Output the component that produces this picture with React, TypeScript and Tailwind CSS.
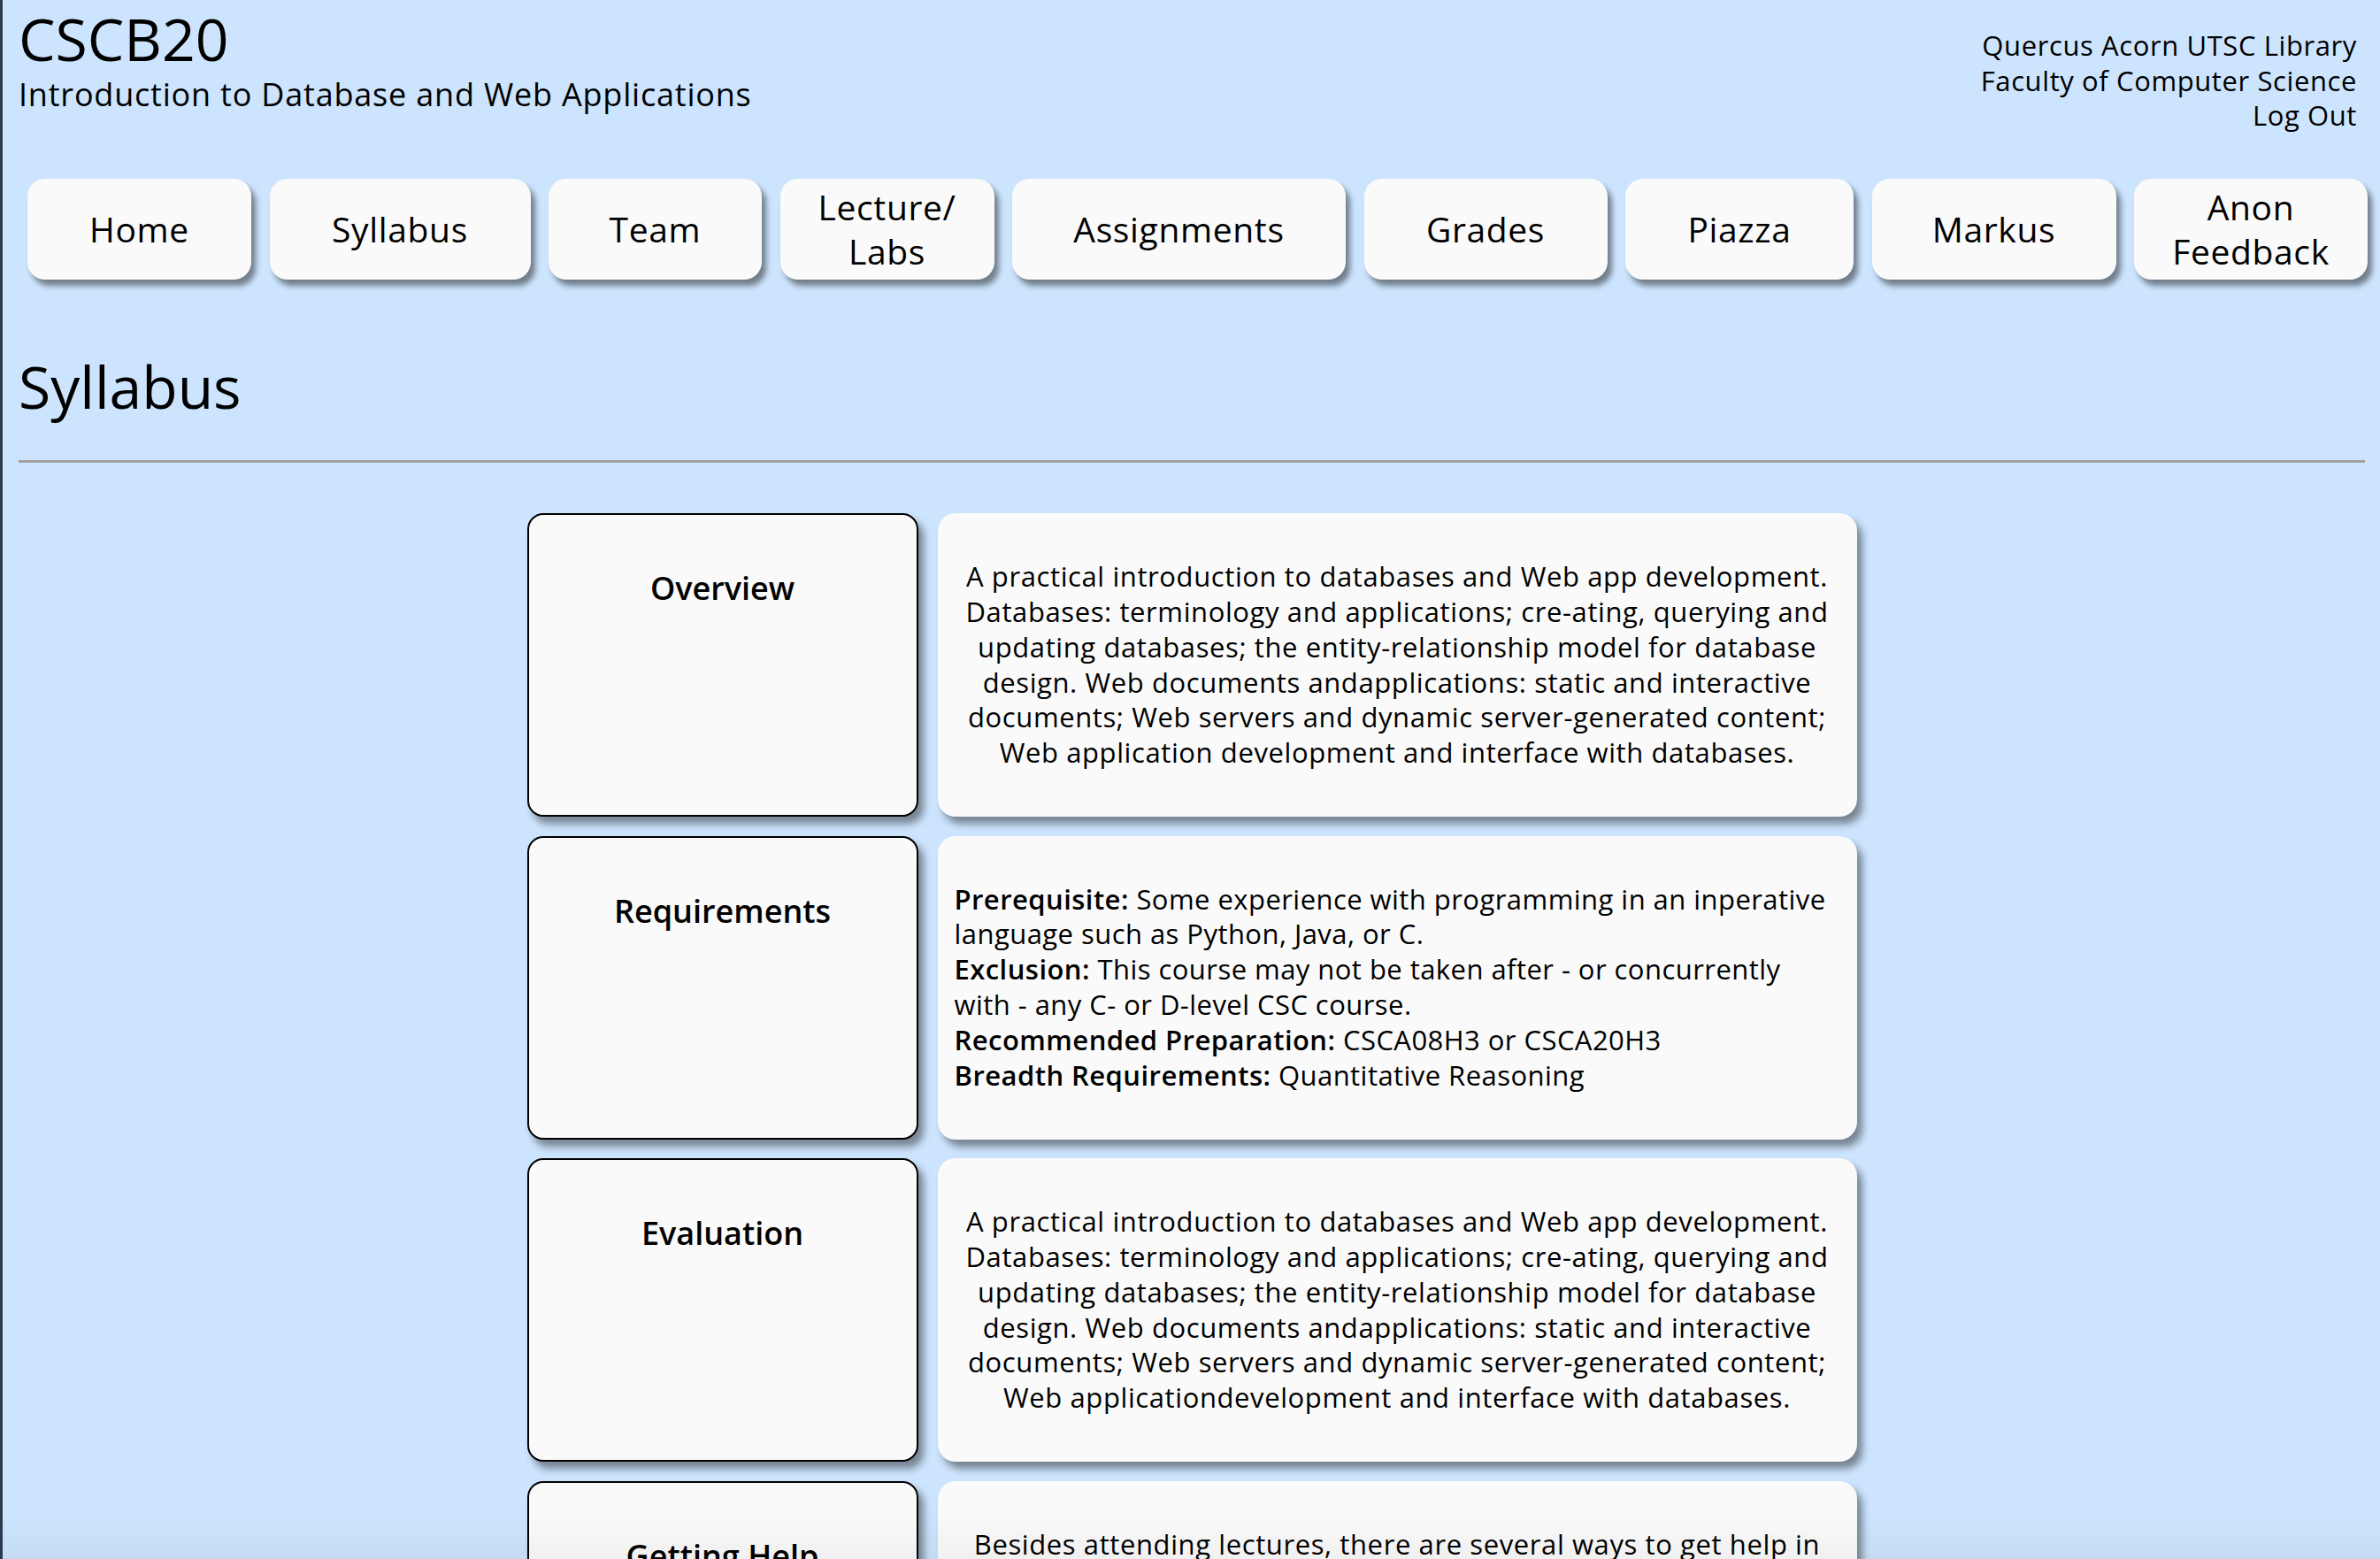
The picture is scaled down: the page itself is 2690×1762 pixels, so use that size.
import React from "react";

const nav: { label: React.ReactNode; w: string }[] = [
  { label: "Home", w: "w-[253px]" },
  { label: "Syllabus", w: "w-[295px]" },
  { label: "Team", w: "w-[241px]" },
  { label: <>Lecture/<br />Labs</>, w: "w-[242px]" },
  { label: "Assignments", w: "w-[377px]" },
  { label: "Grades", w: "w-[275px]" },
  { label: "Piazza", w: "w-[258px]" },
  { label: "Markus", w: "w-[276px]" },
  { label: <>Anon<br />Feedback</>, w: "w-[264px]" },
];

const overview = [
  "A practical introduction to databases and Web app development.",
  "Databases: terminology and applications; cre-ating, querying and",
  "updating databases; the entity-relationship model for database",
  "design. Web documents andapplications: static and interactive",
  "documents; Web servers and dynamic server-generated content;",
  "Web application development and interface with databases.",
];

const evaluation = [
  "A practical introduction to databases and Web app development.",
  "Databases: terminology and applications; cre-ating, querying and",
  "updating databases; the entity-relationship model for database",
  "design. Web documents andapplications: static and interactive",
  "documents; Web servers and dynamic server-generated content;",
  "Web applicationdevelopment and interface with databases.",
];

const help = [
  "Besides attending lectures, there are several ways to get help in",
  "this course: office hours with the instructor and the TAs, the",
  "Piazza discussion board, and the weekly tutorials. Please do not",
  "hesitate to ask questions early if you are having trouble with the",
  "course material, the assignments or anything else in the course;",
  "we are here to help you succeed in CSCB20.",
];

function Lines({ lines }: { lines: string[] }) {
  return (
    <p className="w-full text-center whitespace-nowrap">
      {lines.map((l, i) => (
        <React.Fragment key={i}>
          {l}
          {i < lines.length - 1 && <br />}
        </React.Fragment>
      ))}
    </p>
  );
}

function Row({ title, children }: { title: string; children: React.ReactNode }) {
  return (
    <>
      <div className="h-[343px] rounded-[18px] border-2 border-black bg-[#fafafa] pt-[58px] text-center text-[36px] font-semibold leading-[50px] shadow-[6px_8px_8px_rgba(0,0,0,0.42)]">
        {title}
      </div>
      <div className="flex h-[343px] items-center rounded-[20px] bg-[#fafafa] px-[19px] text-[31px] leading-[39.8px] tracking-[0.6px] shadow-[6px_8px_8px_rgba(0,0,0,0.42)]">
        {children}
      </div>
    </>
  );
}

export default function App() {
  return (
    <div
      className="relative h-[1762px] overflow-hidden border-l-[3px] border-[#2c3a4e] bg-[#cce4fd] pl-[18px] pr-[17px] text-black"
      style={{ fontFamily: '"Open Sans", "Noto Sans", sans-serif' }}
    >
      <header className="flex items-start justify-between">
        <div>
          <h1 className="mt-[3px] text-[66px] font-medium leading-[80px]">CSCB20</h1>
          <p className="mt-[6px] text-[36px] font-medium leading-none tracking-[0.8px]">
            Introduction to Database and Web Applications
          </p>
        </div>
        <div className="mt-[32px] mr-[9px] text-right text-[31px] leading-[39.5px] tracking-[0.6px]">
          <div>
            <a>Quercus</a> <a>Acorn</a> <a>UTSC Library</a>
          </div>
          <div>
            <a>Faculty of Computer Science</a>
          </div>
          <div>
            <a>Log Out</a>
          </div>
        </div>
      </header>

      <nav className="mt-[51.5px] flex gap-[20.5px] pl-[10px]">
        {nav.map((n, i) => (
          <div
            key={i}
            className={`${n.w} flex h-[114px] shrink-0 items-center justify-center rounded-[20px] bg-[#fafafa] text-center text-[39px] font-medium leading-[50px] tracking-[0.65px] shadow-[5px_7px_6px_rgba(0,0,0,0.45)]`}
          >
            <span>{n.label}</span>
          </div>
        ))}
      </nav>

      <h2 className="mt-[80px] text-[66px] font-medium leading-[80px]">Syllabus</h2>
      <div className="mt-[44px] h-[3px] bg-[#a2a2a2]" />

      <div className="mt-[57px] grid grid-cols-[442px_1039px] justify-center gap-x-[22px] gap-y-[21.5px]">
        <Row title="Overview">
          <Lines lines={overview} />
        </Row>
        <Row title="Requirements">
          <p className="w-full text-left whitespace-nowrap tracking-[0.45px]">
            <b className="font-semibold">Prerequisite:</b> Some experience with programming in an inperative
            <br />
            language such as Python, Java, or C.
            <br />
            <b className="font-semibold">Exclusion:</b> This course may not be taken after - or concurrently
            <br />
            with - any C- or D-level CSC course.
            <br />
            <b className="font-semibold">Recommended Preparation:</b> CSCA08H3 or CSCA20H3
            <br />
            <b className="font-semibold">Breadth Requirements:</b> Quantitative Reasoning
          </p>
        </Row>
        <Row title="Evaluation">
          <Lines lines={evaluation} />
        </Row>
        <Row title="Getting Help">
          <Lines lines={help} />
        </Row>
      </div>

      <div className="pointer-events-none absolute bottom-0 left-0 right-0 h-[52px] bg-gradient-to-b from-[rgba(0,0,0,0)] to-[rgba(0,0,0,0.04)]" />
    </div>
  );
}
